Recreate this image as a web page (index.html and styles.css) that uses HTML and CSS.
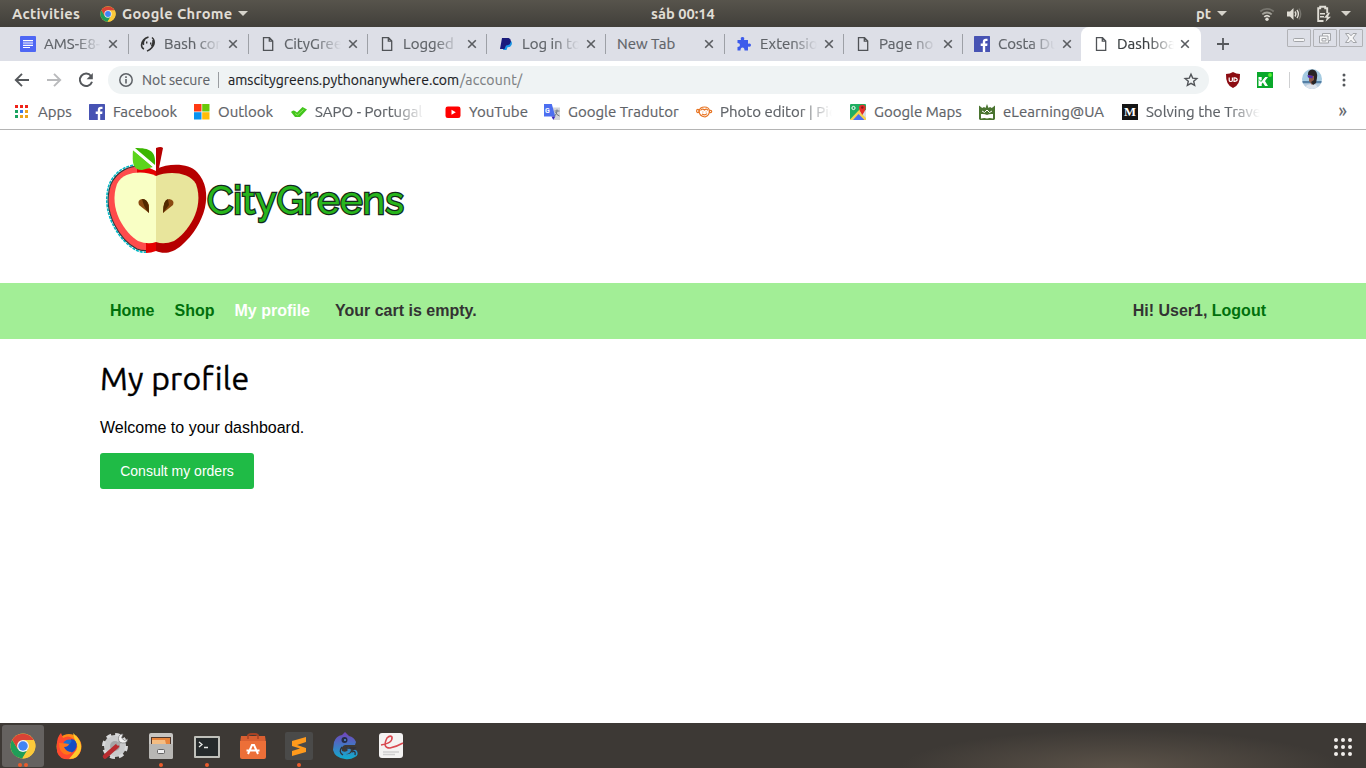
FILE: index.html
```html
<!DOCTYPE html>
<html lang="en">
<head>
<meta charset="utf-8">
<title>Dashboard</title>
<link rel="stylesheet" href="styles.css">
</head>
<body>
<svg class="defs" aria-hidden="true">
  <symbol id="chrome" viewBox="0 0 48 48">
    <circle cx="24" cy="24" r="23" fill="#fbc93b"/>
    <path d="M4.100 12.500A23 23 0 0 0 22.500 47L33.500 29 24 24 14 29z" fill="#1f9d58"/>
    <path d="M24 13h20a23 23 0 0 1-21 34l11-18z" fill="#fbc93b"/>
    <path d="M4.100 12.500 14 29 24 13H44A23 23 0 0 0 4.100 12.500z" fill="#d94335"/>
    <circle cx="24" cy="24" r="11" fill="#f3f3f3"/><circle cx="24" cy="24" r="8.800" fill="#4285f4"/>
  </symbol>
  <symbol id="page" viewBox="0 0 16 16"><path d="M3.500 1.700h6l3.200 3.200v9.400H3.500zM9.300 1.700v3.500h3.400" fill="none" stroke="#505357" stroke-width="1.300"/></symbol>
  <symbol id="fb" viewBox="0 0 16 16"><rect width="16" height="16" rx=".6" fill="#4753b3"/><path d="M8.800 16V10H6.700V7.600h2.100V6c0-2.200 1.200-3.200 3.100-3.200h1.600V5h-1.200c-.9 0-1.100.4-1.100 1.100v1.500h2.300L13.200 10h-2v6z" fill="#fff"/></symbol>
  <symbol id="x" viewBox="0 0 10 10"><path d="M1.200 1.200 8.800 8.800M8.800 1.200 1.200 8.800" stroke="#5a5d61" stroke-width="1.600"/></symbol>
</svg>

<header class="topbar">
  <span class="activities">Activities</span>
  <svg class="i16"><use href="#chrome"/></svg>
  <span class="appname">Google Chrome</span><i class="caret"></i>
  <span class="clock">sáb 00:14</span>
  <div class="tray">
    <span class="lang">pt</span><i class="caret"></i>
    <svg class="wifi" width="16" height="16" viewBox="0 0 16 16" fill="none" stroke-width="1.800"><path d="M1.300 5.500a10 10 0 0 1 13.400 0" stroke="#77756e"/><path d="M3.300 8.300a7 7 0 0 1 9.400 0" stroke="#a3a199"/><path d="M5.300 10.900a4 4 0 0 1 5.400 0" stroke="#e0ddd5"/><circle cx="8" cy="13.300" r="1.700" fill="#e0ddd5"/></svg>
    <svg class="vol" width="16" height="16" viewBox="0 0 16 16"><path d="M1 5.500h3L7.500 2v12L4 10.500H1z" fill="#e0ddd5"/><path d="M9 5.500q1.700 2.500 0 5M11 4q2.800 4 0 8" fill="none" stroke="#e0ddd5" stroke-width="1.400"/><path d="M13 2.500q3.400 5.500 0 11" fill="none" stroke="#77756e" stroke-width="1.400"/></svg>
    <svg class="bat" width="16" height="18" viewBox="0 0 16 18"><path d="M7.500 16H2.200V3.200h2V1.700h5v1.500h2v5" fill="none" stroke="#e0ddd5" stroke-width="1.900"/><path d="M4 8h5v1.500H4zM4 11h4v1.500H4zM12.500 7.500 8 12.700h2.800l-1.300 4 5.500-5h-3l2-4z" fill="#e0ddd5"/></svg>
    <i class="caret"></i>
  </div>
</header>

<nav class="tabs">
  <div class="tab"><svg class="i16" viewBox="0 0 16 16"><rect width="16" height="16" rx="1" fill="#4e67f4"/><path d="M3 4.700h10M3 7h10M3 9.300h10M3 11.500h7" stroke="#fff" stroke-width="1.200"/></svg><b>AMS-E8-</b><svg class="x"><use href="#x"/></svg></div>
  <div class="tab"><svg class="i16" viewBox="0 0 16 16" fill="none" stroke="#333" stroke-width="1.500"><path d="M8.500 1Q2 3 1.500 9q0 3 2.500 4M5 3Q2.500 6 3.500 9"/><path d="M12 1.500Q15 4 14 8T7 15.200M13 4q.5 4-1.500 6.500"/><path d="M6 6.500h1.400M10 7.500h1.400" stroke-width="1.800"/></svg><b>Bash con</b><svg class="x"><use href="#x"/></svg></div>
  <div class="tab"><svg class="i16"><use href="#page"/></svg><b>CityGree</b><svg class="x"><use href="#x"/></svg></div>
  <div class="tab"><svg class="i16"><use href="#page"/></svg><b>Logged</b><svg class="x"><use href="#x"/></svg></div>
  <div class="tab"><svg class="i16" viewBox="0 0 16 16"><path d="M6.500 5h6.500q1.500 1.500.5 4T9.500 11.300L8.500 14H5z" fill="#1997e6"/><path d="M4 2h6.500q3 .8 2.200 4.200T8 9.600L6.500 13H2z" fill="#1a1c7c"/></svg><b>Log in to</b><svg class="x"><use href="#x"/></svg></div>
  <div class="tab blank"><b>New Tab</b><svg class="x"><use href="#x"/></svg></div>
  <div class="tab"><svg class="i16" viewBox="0 0 16 16"><path d="M1.500 4H5q-1-3 1.500-3T8 4h4v3.700q3-1 3 1.400t-3 1.400V14.500H8.500q0-3-2-3t-2 3h-3V11q2.500 0 2.500-2T1.500 7z" fill="#3c5beb"/></svg><b>Extensio</b><svg class="x"><use href="#x"/></svg></div>
  <div class="tab"><svg class="i16"><use href="#page"/></svg><b>Page no</b><svg class="x"><use href="#x"/></svg></div>
  <div class="tab"><svg class="i16"><use href="#fb"/></svg><b>Costa Du</b><svg class="x"><use href="#x"/></svg></div>
  <div class="tab active"><svg class="i16"><use href="#page"/></svg><b>Dashboa</b><svg class="x"><use href="#x"/></svg></div>
  <svg class="plus" width="14" height="14" viewBox="0 0 14 14"><path d="M7 1v12M1 7h12" stroke="#55585c" stroke-width="1.800"/></svg>
  <div class="winctl">
    <i><svg viewBox="0 0 22 16"><rect x="5.500" y="8.500" width="11" height="3" rx="1"/></svg></i>
    <i><svg viewBox="0 0 22 16"><path d="M8.500 3.500h8v7h-2v2.500h-9V6h3zM8.500 6H14v4.500M8 8.500h4v2.500H8z"/></svg></i>
    <i><svg viewBox="0 0 22 16"><path d="M5.500 3.500h3.500l2 2.300 2-2.300h3.500L13 8l3.500 4.500H13l-2-2.300-2 2.300H5.500L9 8z"/></svg></i>
  </div>
</nav>

<div class="toolbar">
  <svg width="16" height="16" viewBox="0 0 16 16" fill="none" stroke="#55585c" stroke-width="1.900"><path d="M15 8H2.500M8 1.800 1.800 8 8 14.200"/></svg>
  <svg class="fwd" width="16" height="16" viewBox="0 0 16 16" fill="none" stroke="#b9babc" stroke-width="1.900"><path d="M1 8h12.500M8 1.800 14.200 8 8 14.200"/></svg>
  <svg class="reload" width="16" height="16" viewBox="0 0 16 16"><path d="M13 4A6.200 6.200 0 1 0 14 9.700" fill="none" stroke="#55585c" stroke-width="2"/><path d="M14.800 1v6.200H8.600z" fill="#55585c"/></svg>
  <div class="omnibox">
    <svg width="16" height="16" viewBox="0 0 16 16"><circle cx="8" cy="8" r="6.200" fill="none" stroke="#5f6368" stroke-width="1.500"/><path d="M8 7v4.500M8 4.300V6" stroke="#5f6368" stroke-width="1.600"/></svg>
    <span class="secure">Not secure</span><i class="bar"></i>
    <span class="host">amscitygreens.pythonanywhere.com</span><span class="path">/account/</span>
    <svg class="star" width="16" height="16" viewBox="0 0 16 16"><path d="M8 2.200 9.700 6.100l4.200.4-3.200 2.800.95 4.100L8 11.300l-3.650 2.100.95-4.100L2.100 6.500l4.200-.4z" fill="none" stroke="#505357" stroke-width="1.400"/></svg>
  </div>
  <svg class="ublock" width="16" height="16" viewBox="0 0 16 16"><path d="M8 0q3 2 7 2 .5 11-7 14Q.5 13 1 2q4 0 7-2z" fill="#8c0c12"/><path d="M4.200 5.500v2.700q0 1.300 1.600 1.300t1.600-1.300V5.500M9 5.800h1q2.200.2 2.200 1.800T10 9.300H9z" fill="none" stroke="#fff" stroke-width="1.200"/></svg>
  <svg class="kext" width="16" height="16" viewBox="0 0 16 16"><rect width="16" height="16" fill="#0aa82b"/><path d="M1.500 5h3.200v4L8 5h3L8 9l3 5H8l-2.200-3.500L4.700 12v2H1.500z" fill="#fff"/><path d="m2 7.500 2 2L7.500 5" fill="none" stroke="#0aa82b" stroke-width=".9"/><circle cx="13" cy="3" r="1.900" fill="#58f430"/></svg>
  <i class="divider"></i>
  <svg class="avatar" width="20" height="20" viewBox="0 0 20 20"><defs><clipPath id="av"><circle cx="10" cy="10" r="10"/></clipPath></defs><g clip-path="url(#av)"><rect width="20" height="20" fill="#a6cce2"/><path d="M0 12h20v2.500H0z" fill="#547fa5"/><path d="M0 14.500h20V20H0z" fill="#b9cbdd"/><path d="m2 20 3-4 4-1 5 1 3 4z" fill="#dde3ec"/><path d="m7 4 6 2-.5 6-2.500 4-3-4z" fill="#8d5946"/><path d="M6 5q0-4.500 5-4.500 5 1 4 8.500L14 14l-3 2-2-3 3-2v-4l-6-1z" fill="#282426"/><path d="m5.500 6 5.500 1-.8 2.500-4.200-1z" fill="#502aad"/></g></svg>
  <svg class="menu" width="4" height="16" viewBox="0 0 4 16" fill="#55585c"><circle cx="2" cy="3" r="1.500"/><circle cx="2" cy="8" r="1.500"/><circle cx="2" cy="13" r="1.500"/></svg>
</div>

<div class="bookmarks">
  <a><svg class="i16" viewBox="0 0 16 16"><path d="M1 1h3v3H1zM6 1h3v3H6zM11 1h3v3h-3z" fill="#ef2319"/><path d="M1 6h3v3H1z" fill="#1aa260"/><path d="M6 6h3v3H6z" fill="#3b78e7"/><path d="M11 6h3v3h-3zM6 11h3v3H6zM11 11h3v3h-3z" fill="#eca31b"/><path d="M1 11h3v3H1z" fill="#1aa260"/></svg><span class="w-apps">Apps</span></a>
  <a><svg class="i16"><use href="#fb"/></svg><span class="w-face">Facebook</span></a>
  <a><svg class="i16" viewBox="0 0 16 16"><path d="M0 0h7.500v7.500H0z" fill="#ff3a12"/><path d="M8.200 0h7.300v7.500H8.200z" fill="#68c90a"/><path d="M0 8.200h7.500v7.300H0z" fill="#0a93f0"/><path d="M8.200 8.200h7.300v7.300H8.200z" fill="#ffbc08"/></svg><span class="w-outlook">Outlook</span></a>
  <a><svg class="i16" viewBox="0 0 16 16"><path d="M0 8Q2 5.500 4 7l2 1.500L11.500 3 16 5.500 9 13H4z" fill="#43c51d"/><path d="m4 9.500 2.500 1.500 6-5.500" fill="none" stroke="#8fe75c" stroke-width="1"/></svg><span class="sapo">SAPO - Portugal</span></a>
  <a class="yt"><svg class="i16" viewBox="0 0 16 16"><rect x=".5" y="2.500" width="15" height="11.500" rx="2.300" fill="#f00"/><path d="m6.500 5.800 4.300 2.500-4.300 2.500z" fill="#fff"/></svg><span class="w-yt">YouTube</span></a>
  <a><svg class="i16" viewBox="0 0 16 16"><path d="M7 3.500h9V16h-6z" fill="#d4d5d8"/><path d="M0 0h7.800l3.500 12.500H0z" fill="#4c6ef0"/><path d="m7.500 12.500 3.800 0-2 3.500z" fill="#392bbe"/><text x="1" y="9" class="gletter">G</text><path d="M10.500 7h5M13 5.500V7q0 3-2.500 5M11.500 8q1 3 4 4" fill="none" stroke="#6e7680"/></svg><span class="w-trad">Google Tradutor</span></a>
  <a><svg class="i16" viewBox="0 0 16 16" fill="none" stroke="#e87422" stroke-width="1.200"><path d="M3 7q1-4 5.500-4T13.500 7q0 4.500-4.500 6Q3 12 3 7z"/><ellipse cx="1.900" cy="7" rx="1.300" ry="1.700"/><circle cx="14.500" cy="7.500" r="1.200"/><path d="M4.500 6.500q2-2.500 4-.5 2-2 3.500.5M6 10q3 2 5-.5M6.500 8h.8M9.700 8h.8"/></svg><span class="picfade">Photo editor | Pic</span></a>
  <a class="maps"><svg class="i16" viewBox="0 0 16 16"><rect width="16" height="16" rx="1" fill="#20ae61"/><path d="M0 15.500 10 5l6 5v6H0z" fill="#f7d34d"/><path d="M16 6v8l-6-6z" fill="#dadce0"/><path d="m3 16 5.500-6 6 6z" fill="#4c6ef0"/><path d="M12.300 11Q9 6 9 3.500a3.400 3.400 0 0 1 6.700 0q0 2.500-3.400 7.500z" fill="#e52d29"/><circle cx="12.300" cy="3.500" r="1.200" fill="#861a17"/><circle cx="3.500" cy="4" r="1.600" fill="none" stroke="#fff"/></svg><span class="w-maps">Google Maps</span></a>
  <a><svg class="i16" viewBox="0 0 16 16"><path d="M0 1.500 3.200 4 5 3l1.500 1L8 0l1.500 4L11 3l1.800 1L16 1.500V15l-1 1H1l-1-1z" fill="#4a7430"/><path d="M2 10q3.500-.5 6 1 2.500-1.500 6-1v4.500q-3.500-1-6 0-2.500-1-6 0z" fill="#fff"/><path d="m3 7 2.500 1.500L8 6l2.500 2.500L13 7" stroke="#fff" fill="none"/></svg><span class="w-ua">eLearning@UA</span></a>
  <a><svg class="i16" viewBox="0 0 16 16"><rect width="16" height="16" fill="#151515"/><text x="2" y="12" class="mletter" textLength="12" lengthAdjust="spacingAndGlyphs">M</text></svg><span class="medfade">Solving the Trave</span></a>
  <span class="more">»</span>
</div>

<main class="site">
  <svg class="logo" width="310" height="110" viewBox="0 0 310 110" aria-label="CityGreens">
    <path d="M47 18C31 15 17 22 11 36 1 65 21 92 36 101q11 5 20 0V24z" fill="#fe4b4b"/>
    <path d="M45 17C29 15 15 22 9 37 0 65 20 94 36 102q6 3 11 2" fill="none" stroke="#00b9c5" stroke-width="1.600" stroke-dasharray="3 1"/>
    <path d="M45 18.300C30 16.500 16.500 23 10.500 37 1.500 65 21 93 37 101q5 2 10 1.500" fill="none" stroke="#263b42" stroke-width="1.100"/>
    <path d="M37 20q11-1 19 3v80q-5 2-10 2v-9q-9-30-9-76z" fill="#e60000"/>
    <path d="M56 21C69 15 89 15 97 24 115 43 105 77 82 97c-10 9-19 9-26 6z" fill="#b60000"/>
    <path d="M56 28C46 23 24 22 17 36 8 61 25 85 38 93q10 4 18 1z" fill="#f9ffc5"/>
    <path d="M56 28c11-5 33-5 40 8 9 25-9 49-22 57q-10 4-18 1z" fill="#e8e59c"/>
    <path d="M56 0q5-2 7 0l-4 20-3 2z" fill="#b60000"/>
    <path d="M33 2c-1 14 0 20 9 20l11-3z" fill="#5cd41b"/><path d="M35 0c15 0 21 3 20 17z" fill="#3bb600"/>
    <path d="M32 0 54 18.500" stroke="#fff" stroke-width="2"/>
    <path d="M49 65 39 57q-2-5 3-6 5 0 7 6z" fill="#8a4a12"/><path d="M42 51q7-1 7 14-5-5-7-14z" fill="#512800"/>
    <path d="M63 65q0-13 6-14 6 1 4 6z" fill="#8a4a12"/><path d="M63 65q0-13 5-14l1 6z" fill="#512800"/>
    <text x="107" y="65.500" class="brand" textLength="197" lengthAdjust="spacingAndGlyphs">CityGreens</text>
  </svg>
  <div class="sitebar">
    <a>Home</a><a>Shop</a><a class="current">My profile</a><span class="cart">Your cart is empty.</span>
    <span class="user">Hi! User1, <a>Logout</a></span>
  </div>
  <section class="content">
    <h1>My profile</h1>
    <p>Welcome to your dashboard.</p>
    <a class="button">Consult my orders</a>
  </section>
</main>

<footer class="dock">
  <div class="app on"><svg viewBox="0 0 28 28"><use href="#chrome" x="1" y="1" width="26" height="26"/></svg><i></i><i></i></div>
  <div class="app"><svg viewBox="0 0 28 28"><circle cx="14" cy="14.500" r="12.500" fill="#ff8a16"/><path d="M2 12Q2 5 6 1l2 5q5-3 9 0 5 3 4-3 6 7 5 14-1 8-9 10-12 2-15-7z" fill="#ff4a2e"/><path d="M18 1q9 7 8 16-2 10-12 10l5-6q6-6 1-12z" fill="#ffcb2c"/><circle cx="14" cy="14" r="6.500" fill="#1b70d3"/><path d="M7.500 14q5 2 8-3 2-2 0-4 7 0 6 8-2 6-8 6-5-1-6-7z" fill="#174dc4"/><path d="M4 11q5 0 10 1-1 3-5 3 2 5 8 5-3 4-8 2-5-3-5-11z" fill="#ff7419"/></svg></div>
  <div class="app"><svg viewBox="0 0 28 28"><circle cx="14" cy="14" r="11" fill="#c9cacb"/><circle cx="14" cy="14" r="11.500" fill="none" stroke="#d8d9da" stroke-width="3" stroke-dasharray="5 4"/><circle cx="14" cy="14" r="5" fill="#a5a6a7"/><path d="M4 24.500 16 14" stroke="#b92c30" stroke-width="4.500" stroke-linecap="round"/><path d="m16 13 4-4" stroke="#aaa" stroke-width="3"/><path d="M22 2a4.500 4.500 0 1 0 4.500 5l-3 1.500L20.500 6z" fill="#f3f3f3" stroke="#777" stroke-width=".7"/></svg></div>
  <div class="app"><svg viewBox="0 0 28 28"><rect x="2" y="1" width="24" height="26" rx="2" fill="#c6c5c2"/><path d="M4 5h20v7H4z" fill="#51372b"/><path d="M5 6h18v6H5z" fill="#e7863d"/><path d="M5 8h13l1 4H5z" fill="#f4bd82"/><path d="M2 12h24v13q0 2-2 2H4q-2 0-2-2z" fill="#b8b7b4"/><rect x="10.500" y="17.500" width="7" height="4" rx="1" fill="#eee" stroke="#656565"/></svg><i></i></div>
  <div class="app"><svg viewBox="0 0 28 28"><rect x="1" y="4" width="26" height="22" rx="1" fill="#bfc0ba"/><rect x="3" y="6" width="22" height="18" fill="#252a2b"/><path d="m6 10 3 2.500L6 15M11 15.500h4" fill="none" stroke="#e8e9e6" stroke-width="1.300"/></svg><i></i></div>
  <div class="app"><svg viewBox="0 0 28 28"><path d="M9 9V4q0-2 5-2t5 2v5" fill="none" stroke="#a64325" stroke-width="2"/><path d="M2 4h24l1 7H1z" fill="#d95f31"/><path d="M1 9h26v16q0 2-2 2H3q-2 0-2-2z" fill="#ec6f38"/><path d="M9 7V4q0-2 5-2t5 2v3" fill="none" stroke="#a64325" stroke-width="1.500"/><path d="m9 22 4-9h2l4 9M7.500 18.500h13" fill="none" stroke="#fff" stroke-width="2"/></svg></div>
  <div class="app"><svg viewBox="0 0 28 28"><rect width="28" height="28" rx="2" fill="#4a4a49"/><path d="M21 5v5l-9 3 9 3v4L7 24v-5l8-2.500L7 14V9z" fill="#ff9a1c"/></svg><i></i></div>
  <div class="app"><svg viewBox="0 0 28 28"><defs><linearGradient id="cham" x2="0" y2="1"><stop stop-color="#7442bb"/><stop offset="1" stop-color="#10adcd"/></linearGradient></defs><path d="M3 10Q5 4 11 3l3-3 4 4q5 1 7 6l-1 3H14q-4 1-3 6 4 2 6-1l-2-2 3-1 2 3q-1 4-5 4 3 1 6-2 2-4 5-1 2 4-2 6-5 3-10 2Q4 26 2 18z" fill="url(#cham)"/><path d="M11 15q-4 5 1 8M15 16h9l-2 2M21 20q4-2 3 3" fill="none" stroke="#303138" stroke-width="1.300"/><circle cx="13.500" cy="8" r="3" fill="#252c46"/><circle cx="14" cy="8" r="1" fill="#5790df"/></svg></div>
  <div class="app"><svg viewBox="0 0 28 28"><rect x="2" y="1" width="24" height="25" rx="3" fill="#f4f3f2"/><path d="M4 13q12-2 11-8-2-2-5 1-5 10 3 10 6-1 13-5" fill="none" stroke="#d94950" stroke-width="1.600"/><path d="M6 20h16M6 22.500h12" stroke="#cfcfcf" stroke-width="1.300"/></svg></div>
  <svg class="grid" width="18" height="18" viewBox="0 0 18 18" fill="#f1efeb"><circle cx="2" cy="2" r="2"/><circle cx="9" cy="2" r="2"/><circle cx="16" cy="2" r="2"/><circle cx="2" cy="9" r="2"/><circle cx="9" cy="9" r="2"/><circle cx="16" cy="9" r="2"/><circle cx="2" cy="16" r="2"/><circle cx="9" cy="16" r="2"/><circle cx="16" cy="16" r="2"/></svg>
</footer>
</body>
</html>
```
FILE: styles.css
```css
* { box-sizing: border-box; }
body { margin: 0; width: 1366px; height: 768px; overflow: hidden; display: flex; flex-direction: column; background: #fff; font-family: "Liberation Sans", Arial, sans-serif; }
svg { display: block; flex: none; overflow: visible; }
.defs { width: 0; height: 0; position: absolute; }
.i16 { width: 16px; height: 16px; }
span { white-space: nowrap; }

.topbar { height: 27px; flex: none; display: flex; align-items: center; padding-left: 12px; background: linear-gradient(#57544c, #413f3a); color: #e0ddd5; font: bold 14.667px/26px "Ubuntu", "Noto Sans", sans-serif; }
.activities { width: 68px; margin-right: 20px; letter-spacing: .3px; }
.appname { width: 110px; margin-left: 6px; letter-spacing: .3px; }
.caret { width: 0; height: 0; border: 5px solid transparent; border-top-color: #d6d3cb; border-bottom: 0; margin-left: 6px; }
.clock { margin-left: 403px; }
.tray { margin-left: auto; width: 170px; display: flex; align-items: center; }
.lang { width: 15px; }
.wifi { margin-left: 32px; }
.vol { margin-left: 11px; }
.bat { margin-left: 14px; }
.tray .bat + .caret { margin-left: 9px; }

.tabs { height: 34px; flex: none; display: flex; background: #dddfe7; padding-left: 9px; }
.tab { width: 119px; display: flex; align-items: center; padding-left: 11px; font: 15px/34px "Ubuntu", "Noto Sans", sans-serif; color: #5f6368; -webkit-text-stroke: .2px; }
.tab:nth-child(-n+2) { width: 120px; }
.tab:nth-child(9) { width: 118px; }
.tab::after { content: ""; width: 1px; height: 20px; background: #9da0a6; margin-left: auto; }
.tab:nth-child(9)::after, .tab.active::after { visibility: hidden; }
.tab b { width: 57px; margin-left: 8px; overflow: hidden; white-space: nowrap; font-weight: 400; -webkit-mask-image: linear-gradient(90deg, #000 55%, transparent); mask-image: linear-gradient(90deg, #000 55%, transparent); }
.tab.blank b { width: 80px; margin-left: 0; mask-image: none; -webkit-mask-image: none; }
.tab .x { width: 10px; height: 10px; margin-left: 7px; margin-right: -8px; }
.tab.active { width: 120px; padding-left: 12px; background: #fff; border-radius: 8px 8px 0 0; color: #3c4043; }
.active .x { margin-left: 6px; }
.plus { margin: 10px 0 0 15px; }
.winctl { display: flex; gap: 2px; margin: 2px 3px 0 auto; }
.winctl i { width: 24px; height: 18px; border: 1px solid #b1b2b6; border-radius: 1px; }
.winctl svg { width: 22px; height: 16px; fill: #f5f5f6; stroke: #a3a5a9; stroke-width: 1; }

.toolbar { height: 37px; flex: none; display: flex; align-items: center; padding-left: 14px; font: 14px/28px "Ubuntu", "Noto Sans", sans-serif; -webkit-text-stroke: .15px; }
.fwd { margin-left: 16px; }
.reload { margin-left: 16px; }
.omnibox { width: 1101px; height: 28px; margin-left: 14px; border-radius: 14px; background: #eff3f4; display: flex; align-items: center; padding-left: 10px; }
.secure { width: 69px; margin-left: 8px; color: #5f6368; }
.bar { width: 1px; height: 16px; background: #9a9da1; margin: 0 9px 0 7px; }
.host { color: #202124; width: 232px; letter-spacing: .03px; }
.path { color: #7c7f83; letter-spacing: .25px; }
.star { margin: 0 10px 0 auto; }
.ublock { margin-left: 16px; }
.kext { margin-left: 16px; }
.divider { width: 1px; height: 16px; background: #cfd0d2; margin-left: 16px; }
.avatar { margin-left: 12px; margin-top: -2px; }
.menu { margin-left: 20px; }

.bookmarks { height: 32px; flex: none; border-bottom: 1px solid #b4b4b4; display: flex; gap: 16px; padding: 0 0 4px 14px; align-items: center; font: 15px/27px "Ubuntu", "Noto Sans", sans-serif; color: #5f6368; -webkit-text-stroke: .2px; }
.bookmarks a { display: flex; align-items: center; gap: 8px; }
.w-apps { width: 35px; }
.w-face { width: 65px; }
.w-outlook { width: 57px; }
.sapo { width: 110px; -webkit-mask-image: linear-gradient(90deg, #000 70%, transparent); mask-image: linear-gradient(90deg, #000 70%, transparent); }
.yt { margin-left: 4px; }
.w-yt { width: 59px; }
.w-trad { width: 112px; }
.picfade { width: 112px; overflow: hidden; -webkit-mask-image: linear-gradient(90deg, #000 70%, transparent); mask-image: linear-gradient(90deg, #000 70%, transparent); }
.maps { margin-left: 2px; }
.w-maps { width: 89px; }
.w-ua { width: 103px; }
.medfade { width: 114px; -webkit-mask-image: linear-gradient(90deg, #000 72%, transparent); mask-image: linear-gradient(90deg, #000 72%, transparent); }
.more { margin: -3px 19px 0 auto; font-size: 18px; }
.gletter { font: bold 7px Roboto, sans-serif; fill: #fff; }
.mletter { font: bold 12px "Liberation Serif", serif; fill: #fff; }

.site { flex: 1; min-height: 0; }
.logo { margin: 18px 0 25px 100px; }
.brand { font: 500 40px "Raleway", Lato, sans-serif; fill: #27b51c; stroke: #14291b; stroke-width: 2.600px; paint-order: stroke fill; }
.sitebar { height: 56px; background: #a2ee96; padding: 0 100px; display: flex; align-items: center; font-weight: 700; font-size: 16px; line-height: 20px; color: #333; }
.sitebar a { color: #00700c; padding: 0 10px; }
.sitebar .current { color: #fff; }
.cart { margin-left: 15px; }
.user { margin-left: auto; }
.user a { padding: 0; }
.content { padding-left: 100px; }
.content h1 { margin: 17px 0 0; font: 400 32px/44px "Ubuntu", "Noto Sans", sans-serif; letter-spacing: .2px; color: #000; -webkit-text-stroke: .4px; }
.content p { margin: 19px 0 16px; font-size: 16px; line-height: 18px; color: #000; }
.button { display: block; width: 154px; height: 36px; border-radius: 3px; background: #1fbb46; color: #fff; font-size: 14px; line-height: 36px; text-align: center; }

.dock { height: 45px; flex: none; display: flex; align-items: center; gap: 4px; padding-left: 2px; background: radial-gradient(ellipse 220px 38px at 1120px 45px, #5c5349, transparent), #3d3935; }
.app { width: 42px; height: 42px; display: flex; flex-wrap: wrap; justify-content: center; align-content: flex-start; gap: 0 2px; padding-top: 7px; }
.app svg { width: 28px; height: 28px; margin: 0 6px; }
.app i { width: 4px; height: 4px; border-radius: 2px; background: #eb5b2b; margin-top: 3px; }
.app.on { background: #656260; border-radius: 3px; }
.grid { margin: 2px 14px 0 auto; }
```
